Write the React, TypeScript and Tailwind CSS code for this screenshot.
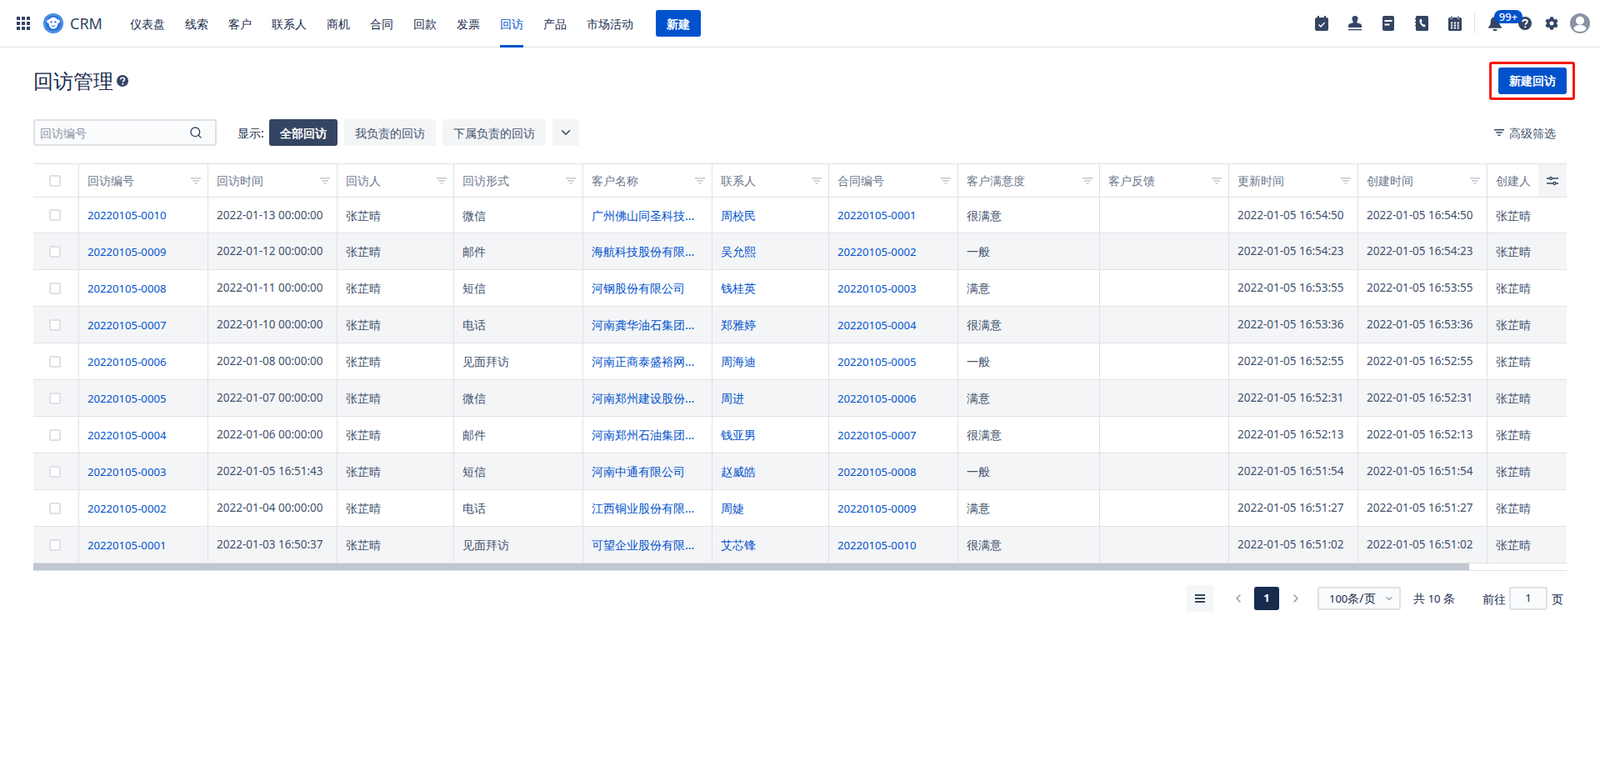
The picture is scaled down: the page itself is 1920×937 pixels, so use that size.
import React from "react";
import { ChevronDown, ChevronLeft, ChevronRight, Search } from "lucide-react";
import { FaCog } from "react-icons/fa";

const FONT = "[font-family:'Noto_Sans','Noto_Sans_CJK_SC',sans-serif]";

const navs = ["仪表盘", "线索", "客户", "联系人", "商机", "合同", "回款", "发票", "回访", "产品", "市场活动"];

const widths = ["w-[55px]", "w-[155px]", "w-[155px]", "w-[140px]", "w-[155px]", "w-[155px]", "w-[140px]", "w-[155px]", "w-[170px]", "w-[155px]", "w-[155px]", "w-[155px]", "w-[140px]"];
const heads = ["", "回访编号", "回访时间", "回访人", "回访形式", "客户名称", "联系人", "合同编号", "客户满意度", "客户反馈", "更新时间", "创建时间", "创建人"];

const rows = [
  ["20220105-0010", "2022-01-13 00:00:00", "微信", "广州佛山同圣科技...", "周校民", "20220105-0001", "很满意", "2022-01-05 16:54:50"],
  ["20220105-0009", "2022-01-12 00:00:00", "邮件", "海航科技股份有限...", "吴允熙", "20220105-0002", "一般", "2022-01-05 16:54:23"],
  ["20220105-0008", "2022-01-11 00:00:00", "短信", "河钢股份有限公司", "钱桂英", "20220105-0003", "满意", "2022-01-05 16:53:55"],
  ["20220105-0007", "2022-01-10 00:00:00", "电话", "河南龚华油石集团...", "郑雅婷", "20220105-0004", "很满意", "2022-01-05 16:53:36"],
  ["20220105-0006", "2022-01-08 00:00:00", "见面拜访", "河南正商泰盛裕网...", "周海迪", "20220105-0005", "一般", "2022-01-05 16:52:55"],
  ["20220105-0005", "2022-01-07 00:00:00", "微信", "河南郑州建设股份...", "周进", "20220105-0006", "满意", "2022-01-05 16:52:31"],
  ["20220105-0004", "2022-01-06 00:00:00", "邮件", "河南郑州石油集团...", "钱亚男", "20220105-0007", "很满意", "2022-01-05 16:52:13"],
  ["20220105-0003", "2022-01-05 16:51:43", "短信", "河南中通有限公司", "赵威皓", "20220105-0008", "一般", "2022-01-05 16:51:54"],
  ["20220105-0002", "2022-01-04 00:00:00", "电话", "江西铜业股份有限...", "周婕", "20220105-0009", "满意", "2022-01-05 16:51:27"],
  ["20220105-0001", "2022-01-03 16:50:37", "见面拜访", "可望企业股份有限...", "艾芯锋", "20220105-0010", "很满意", "2022-01-05 16:51:02"],
];

const Grid = () => (
  <svg width="16" height="16" viewBox="0 0 16 16" fill="#344563">
    {[0, 6, 12].map((y) => [0, 6, 12].map((x) => <rect key={`${x}${y}`} x={x} y={y} width="4" height="4" />))}
  </svg>
);

const Logo = () => (
  <svg width="24" height="24" viewBox="0 0 24 24">
    <circle cx="12" cy="12" r="12" fill="#2f7de1" />
    <circle cx="12" cy="12" r="10.4" fill="#2a74dc" stroke="#a8cbf5" strokeWidth="0.6" />
    <path d="M12 4.800c2.300 0 3.900 1 4.600 2.500 1.700-.5 3.300.6 3.300 2.200 0 1.500-1.200 2.600-2.600 2.500.3 3.200-1.900 6.700-5.300 6.700s-5.600-3.500-5.300-6.700c-1.400.1-2.600-1-2.600-2.500 0-1.600 1.600-2.700 3.300-2.200.7-1.500 2.300-2.500 4.600-2.500z" fill="#fff" />
    <circle cx="9.600" cy="10.400" r="1.150" fill="#1d62c4" />
    <circle cx="14.400" cy="10.400" r="1.150" fill="#1d62c4" />
    <path d="M9.500 14.700c1.300 1 3.700 1 5 0" stroke="#1d62c4" strokeWidth="1" fill="none" />
  </svg>
);

const Help = ({ size = 16, color = "#344563" }: { size?: number; color?: string }) => (
  <svg width={size} height={size} viewBox="0 0 16 16">
    <circle cx="8" cy="8" r="8" fill={color} />
    <path d="M5.200 6.200C5.300 4.600 6.500 3.700 8 3.700c1.700 0 2.800 1 2.800 2.300 0 1.100-.7 1.600-1.300 2-.7.500-1 .8-1 1.700" fill="none" stroke="#fff" strokeWidth="1.900" />
    <circle cx="8.400" cy="12.300" r="1.150" fill="#fff" />
  </svg>
);

const FilterIcon = ({ color = "#c1c7d0" }: { color?: string }) => (
  <svg width="12" height="8" viewBox="0 0 12 8" fill={color}>
    <rect x="0" y="0" width="12" height="1.500" />
    <rect x="2.200" y="3.200" width="7.600" height="1.500" />
    <rect x="4.400" y="6.400" width="3.200" height="1.500" />
  </svg>
);

const TopIcons = () => (
  <div className="flex items-center">
    <svg width="16" height="18" viewBox="0 0 16 18" className="mr-[24px]">
      <rect x="0" y="2" width="16" height="16" rx="2" fill="#344563" />
      <rect x="3" y="0" width="2" height="3" fill="#344563" />
      <rect x="11" y="0" width="2" height="3" fill="#344563" />
      <path d="M4.500 10.500l2.500 2.400 4.500-4.600" stroke="#fff" strokeWidth="1.500" fill="none" />
    </svg>
    <svg width="16" height="18" viewBox="0 0 16 18" className="mr-[25px]">
      <path d="M8 0a3.600 3.600 0 0 1 3.600 3.600c0 1.600-1.100 2.500-1.300 3.700-.1.800.3 1.300 1.200 1.500 2 .3 4.500.6 4.500 3.200v2H0v-2c0-2.600 2.500-2.900 4.500-3.200.9-.2 1.300-.7 1.200-1.500C5.500 6.100 4.400 5.200 4.400 3.600A3.600 3.600 0 0 1 8 0z" fill="#344563" />
      <rect x="0" y="16" width="16" height="1.300" fill="#344563" />
    </svg>
    <svg width="14" height="18" viewBox="0 0 14 18" className="mr-[25px]">
      <rect x="0" y="0" width="14" height="18" rx="2" fill="#344563" />
      <rect x="2.500" y="5" width="9" height="2" fill="#fff" />
      <rect x="2.500" y="9.500" width="6" height="2" fill="#fff" />
    </svg>
    <svg width="16" height="18" viewBox="0 0 16 18" className="mr-[24px]">
      <rect x="1" y="0" width="15" height="18" rx="1.500" fill="#344563" />
      <rect x="0" y="3" width="2.500" height="1.300" fill="#344563" />
      <rect x="0" y="7" width="2.500" height="1.300" fill="#344563" />
      <rect x="0" y="11" width="2.500" height="1.300" fill="#344563" />
      <path d="M6.500 4c.8-.4 1.300-.2 1.600.8l.3 1c.1.5 0 .8-.5 1.200-.2.200-.2.400 0 .9.400 1 .9 1.700 1.500 2.300.3.300.5.300.8.100.5-.3.900-.3 1.300.1l.8.8c.5.5.5 1-.1 1.500-1.100 1-2.400.6-3.600-.5-1.600-1.500-2.700-3.500-3.100-5.500-.2-1.200 0-2.200.8-2.700z" fill="#fff" />
    </svg>
    <svg width="16" height="18" viewBox="0 0 16 18" className="mr-[15px]">
      <rect x="0" y="2" width="16" height="16" rx="1.500" fill="#344563" />
      <rect x="3" y="0" width="2" height="4" rx="1" fill="#344563" stroke="#fff" strokeWidth="0.600" />
      <rect x="11" y="0" width="2" height="4" rx="1" fill="#344563" stroke="#fff" strokeWidth="0.600" />
      {[7.500, 10.500, 13.500].map((y) => [3, 6.800, 10.600].map((x) => <rect key={`${x}${y}`} x={x} y={y} width="2.200" height="2" fill="#fff" />))}
    </svg>
    <div className="w-px h-[24px] bg-[#dfe1e6] mr-[16px]" />
    <div className="relative w-[16px] h-[18px] mr-[20px]">
      <svg width="16" height="18" viewBox="0 0 16 18">
        <path d="M8 0c.7 0 1.200.5 1.200 1.200 2.500.6 4 2.700 4 5.300 0 3.500.8 5.300 2.800 7.200v1H0v-1c2-1.900 2.800-3.700 2.800-7.200 0-2.600 1.500-4.700 4-5.300C6.800.5 7.300 0 8 0z" fill="#344563" />
        <rect x="5.500" y="16" width="5" height="2" rx="1" fill="#344563" />
      </svg>
      <span className="absolute z-10 left-[7px] -top-[7px] w-[34px] h-[16px] rounded-full bg-[#0052cc] text-white text-[13px] leading-[16px] text-center font-medium">99+</span>
    </div>
    <Help />
    <FaCog size={16} color="#344563" className="ml-[16px]" />
    <svg width="24" height="24" viewBox="0 0 24 24" className="ml-[14px]">
      <circle cx="12" cy="12" r="12" fill="#8993a4" />
      <circle cx="12" cy="8.800" r="5" fill="#fff" />
      <path d="M4.300 18.500c.8-3 3.500-4.500 7.700-4.500s6.900 1.500 7.700 4.500A10 10 0 0 1 12 22a10 10 0 0 1-7.700-3.500z" fill="#fff" />
    </svg>
  </div>
);

const Checkbox = () => <span className="block w-[14px] h-[14px] ml-[-2px] rounded-[2px] border-2 border-[#dfe1e6] bg-white" />;

const Id = ({ children }: { children: React.ReactNode }) => <span className="text-[13.15px]">{children}</span>;
const Stamp = ({ children }: { children: React.ReactNode }) => <span className="text-[13.5px]">{children}</span>;
const Num = ({ children }: { children: React.ReactNode }) => <span className="text-[13px]">{children}</span>;

const Cell = ({ w, children, last }: { w: string; children?: React.ReactNode; last?: boolean }) => (
  <div className={`${w} shrink-0 h-full flex items-center px-[10px] whitespace-nowrap overflow-hidden ${last ? "" : "border-r border-[#dfe1e6]"}`}>{children}</div>
);

const Chip = ({ children, active, w }: { children: React.ReactNode; active?: boolean; w: string }) => (
  <div className={`${w} h-[32px] rounded-[3px] flex items-center justify-center ${active ? "bg-[#344563] text-white font-bold" : "bg-[#f4f5f7] text-[#42526e]"}`}>{children}</div>
);

export default function App() {
  return (
    <div className={`${FONT} w-[1920px] h-[937px] bg-white text-[14px] text-[#172b4d] overflow-hidden`}>
      <header className="h-[57px] border-b border-[#dfe1e6] flex items-center pl-[20px] pr-[12px]">
        <Grid />
        <div className="ml-[16px]"><Logo /></div>
        <span className="ml-[8px] w-[72px] text-[18px] text-[#344563]">CRM</span>
        <nav className="flex self-start h-[57px] gap-[24px]">
          {navs.map((n) => (
            <div key={n} className={`h-full flex items-center ${n === "回访" ? "text-[#0052cc] border-b-[3px] border-[#0052cc] pt-[3px]" : "text-[#172b4d]"}`}>{n}</div>
          ))}
        </nav>
        <button className="ml-[27px] w-[54px] h-[32px] bg-[#0052cc] text-white rounded-[3px] font-bold">新建</button>
        <div className="ml-auto"><TopIcons /></div>
      </header>

      <main className="px-[40px]">
        <div className="h-[73px] flex items-center justify-between pt-[6px]">
          <div className="flex items-center">
            <h1 className="text-[24px] text-[#172b4d] leading-[32px]">回访管理</h1>
            <span className="ml-[4px]"><Help size={14} /></span>
          </div>
          <div className="relative">
            <button className="block w-[82px] h-[32px] bg-[#0052cc] text-white rounded-[3px] font-bold">新建回访</button>
            <span className="absolute -left-[11px] -top-[7px] w-[103px] h-[46px] border-[3px] border-[#f5180e] rounded-[3px]" />
          </div>
        </div>

        <div className="mt-[13px] h-[32px] flex items-center">
          <div className="w-[220px] h-[32px] border-2 border-[#dfe1e6] rounded-[3px] bg-[#fafbfc] flex items-center justify-between pl-[6px] pr-[15px]">
            <span className="text-[#8993a4]">回访编号</span>
            <Search size={16} strokeWidth={2} color="#344563" />
          </div>
          <span className="ml-[25px] mr-[8px] w-[30px] whitespace-nowrap text-[#172b4d]">显示:</span>
          <div className="flex gap-[8px]">
            <Chip active w="w-[82px]">全部回访</Chip>
            <Chip w="w-[110px]">我负责的回访</Chip>
            <Chip w="w-[124px]">下属负责的回访</Chip>
            <div className="w-[32px] h-[32px] rounded-[3px] bg-[#f4f5f7] flex items-center justify-center"><ChevronDown size={18} color="#344563" /></div>
          </div>
          <div className="ml-auto flex items-center gap-[6px] pr-[13px] text-[#42526e]">
            <FilterIcon color="#344563" />
            <span>高级筛选</span>
          </div>
        </div>

        <div className="mt-[21px] w-[1840px] overflow-hidden relative">
          <div className="h-[41px] border-t border-b border-[#dfe1e6] flex text-[#6b778c]">
            {heads.map((h, i) => (
              <Cell key={i} w={widths[i]} last={i === 12}>
                {i === 0 ? (
                  <div className="w-full flex justify-center"><Checkbox /></div>
                ) : (
                  <div className="w-full flex items-center justify-between">
                    <span>{h}</span>
                    {i < 12 && <span className="mr-[-2px]"><FilterIcon /></span>}
                  </div>
                )}
              </Cell>
            ))}
          </div>
          <div className="absolute right-0 top-px w-[34px] h-[39px] bg-[#f4f5f7] rounded-bl-[3px] flex items-center justify-center">
            <svg width="14" height="12" viewBox="0 0 14 12" fill="none" stroke="#344563" strokeWidth="1.300">
              <path d="M0 3h3.500M6.500 3H14M0 9h8M11 9h3" />
              <circle cx="5" cy="3" r="1.500" />
              <circle cx="9.500" cy="9" r="1.500" />
            </svg>
          </div>
          {rows.map((r, idx) => {
            const cells: React.ReactNode[] = [
              <div className="w-full flex justify-center"><Checkbox /></div>,
              <a className="text-[#0052cc]"><Id>{r[0]}</Id></a>,
              <Stamp>{r[1]}</Stamp>,
              "张芷晴",
              r[2],
              <a className="text-[#0052cc]">{r[3]}</a>,
              <a className="text-[#0052cc]">{r[4]}</a>,
              <a className="text-[#0052cc]"><Id>{r[5]}</Id></a>,
              r[6],
              "",
              <Stamp>{r[7]}</Stamp>,
              <Stamp>{r[7]}</Stamp>,
              "张芷晴",
            ];
            return (
              <div key={idx} className={`${idx === 0 ? "h-[43px]" : "h-[44px]"} border-b border-[#dfe1e6] flex text-[#42526e] ${idx % 2 ? "bg-[#f4f5f7]" : "bg-white"}`}>
                {cells.map((c, i) => (
                  <Cell key={i} w={widths[i]} last={i === 12}>{c}</Cell>
                ))}
              </div>
            );
          })}
          <div className="h-[9px] border-b border-[#dfe1e6] bg-white">
            <div className="w-[1723px] h-[8px] bg-[#c1c7d0]" />
          </div>
        </div>

        <div className="mt-[17px] h-[32px] flex items-center justify-end pr-[4px]">
          <div className="w-[32px] h-[32px] rounded-[3px] bg-[#f4f5f7] flex items-center justify-center">
            <svg width="12" height="10" viewBox="0 0 12 10" fill="#344563">
              <rect width="12" height="2" /><rect y="4" width="12" height="2" /><rect y="8" width="12" height="2" />
            </svg>
          </div>
          <ChevronLeft size={16} color="#8993a4" className="ml-[22px]" />
          <div className="ml-[11px] w-[30px] h-[28px] rounded-[3px] bg-[#172b4d] text-white flex items-center justify-center font-bold text-[13px]">1</div>
          <ChevronRight size={16} color="#8993a4" className="ml-[12px]" />
          <div className="ml-[18px] w-[100px] h-[28px] border-2 border-[#dfe1e6] rounded-[3px] bg-[#fafbfc] flex items-center justify-between pl-[12px] pr-[6px] text-[#172b4d]">
            <span className="whitespace-nowrap"><Num>100</Num>条/页</span>
            <ChevronDown size={12} color="#42526e" />
          </div>
          <span className="ml-[15px] w-[49px] text-[#172b4d] whitespace-nowrap">共 <Num>10</Num> 条</span>
          <span className="ml-[34px] text-[#172b4d]">前往</span>
          <div className="ml-[4px] w-[46px] h-[28px] border-2 border-[#dfe1e6] rounded-[3px] bg-[#fafbfc] flex items-center justify-center"><Num>1</Num></div>
          <span className="ml-[5px]">页</span>
        </div>
      </main>
    </div>
  );
}
